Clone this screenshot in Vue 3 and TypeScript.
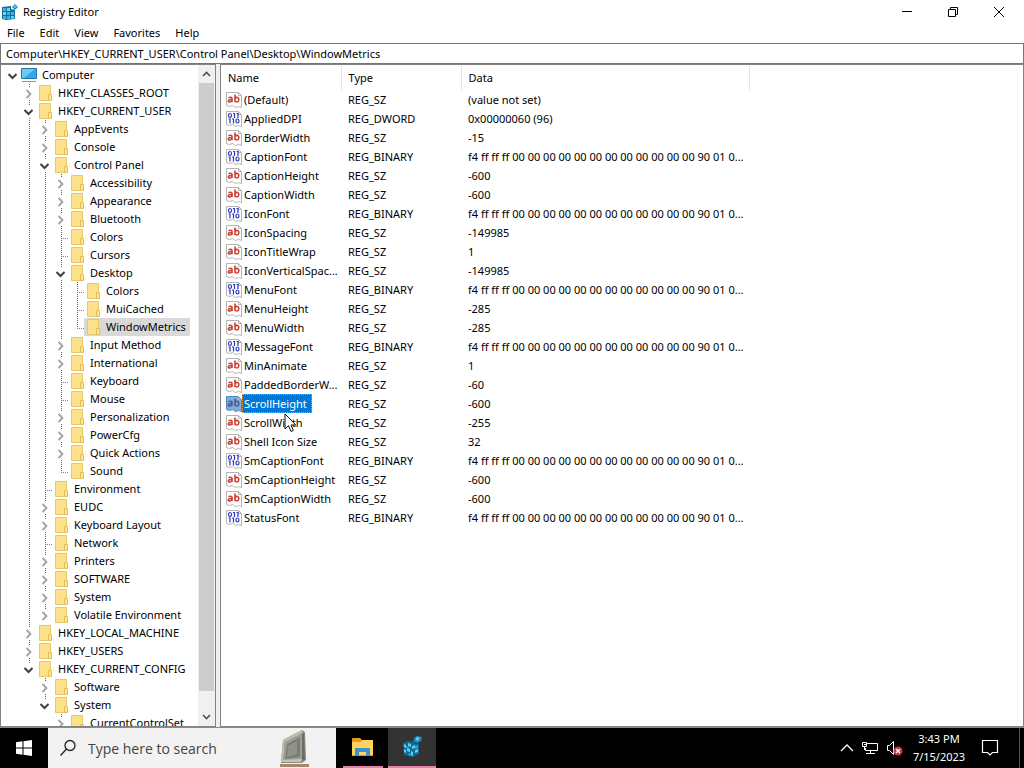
<script setup lang="ts">
import { ref } from 'vue'

type NodeState = 'open' | 'closed' | 'leaf'
interface TreeRow { depth: number; state: NodeState; label: string; guides: boolean[]; last: boolean }
interface RegValue { name: string; type: string; data: string }

const source: [number, NodeState, string][] = [
  [0, 'open', 'Computer'],
  [1, 'closed', 'HKEY_CLASSES_ROOT'],
  [1, 'open', 'HKEY_CURRENT_USER'],
  [2, 'closed', 'AppEvents'],
  [2, 'closed', 'Console'],
  [2, 'open', 'Control Panel'],
  [3, 'closed', 'Accessibility'],
  [3, 'closed', 'Appearance'],
  [3, 'closed', 'Bluetooth'],
  [3, 'leaf', 'Colors'],
  [3, 'leaf', 'Cursors'],
  [3, 'open', 'Desktop'],
  [4, 'leaf', 'Colors'],
  [4, 'leaf', 'MuiCached'],
  [4, 'leaf', 'WindowMetrics'],
  [3, 'closed', 'Input Method'],
  [3, 'closed', 'International'],
  [3, 'leaf', 'Keyboard'],
  [3, 'leaf', 'Mouse'],
  [3, 'closed', 'Personalization'],
  [3, 'closed', 'PowerCfg'],
  [3, 'closed', 'Quick Actions'],
  [3, 'leaf', 'Sound'],
  [2, 'leaf', 'Environment'],
  [2, 'closed', 'EUDC'],
  [2, 'closed', 'Keyboard Layout'],
  [2, 'leaf', 'Network'],
  [2, 'closed', 'Printers'],
  [2, 'closed', 'SOFTWARE'],
  [2, 'closed', 'System'],
  [2, 'closed', 'Volatile Environment'],
  [1, 'closed', 'HKEY_LOCAL_MACHINE'],
  [1, 'closed', 'HKEY_USERS'],
  [1, 'open', 'HKEY_CURRENT_CONFIG'],
  [2, 'closed', 'Software'],
  [2, 'open', 'System'],
  [3, 'closed', 'CurrentControlSet'],
]

// A guide continues below a row when a sibling at that level still follows.
function continues(index: number, level: number): boolean {
  for (let i = index + 1; i < source.length; i++) {
    if (source[i][0] < level) return false
    if (source[i][0] === level) return true
  }
  return false
}

const rows: TreeRow[] = source.map(([depth, state, label], i) => ({
  depth,
  state,
  label,
  guides: Array.from({ length: depth }, (_, level) => continues(i, level)),
  last: !continues(i, depth),
}))

const binary = 'f4 ff ff ff 00 00 00 00 00 00 00 00 00 00 00 00 90 01 0...'
const sz = (name: string, data: string): RegValue => ({ name, type: 'REG_SZ', data })
const bin = (name: string): RegValue => ({ name, type: 'REG_BINARY', data: binary })

const values: RegValue[] = [
  sz('(Default)', '(value not set)'),
  { name: 'AppliedDPI', type: 'REG_DWORD', data: '0x00000060 (96)' },
  sz('BorderWidth', '-15'),
  bin('CaptionFont'),
  sz('CaptionHeight', '-600'),
  sz('CaptionWidth', '-600'),
  bin('IconFont'),
  sz('IconSpacing', '-149985'),
  sz('IconTitleWrap', '1'),
  sz('IconVerticalSpac...', '-149985'),
  bin('MenuFont'),
  sz('MenuHeight', '-285'),
  sz('MenuWidth', '-285'),
  bin('MessageFont'),
  sz('MinAnimate', '1'),
  sz('PaddedBorderW...', '-60'),
  sz('ScrollHeight', '-600'),
  sz('ScrollWidth', '-255'),
  sz('Shell Icon Size', '32'),
  bin('SmCaptionFont'),
  sz('SmCaptionHeight', '-600'),
  sz('SmCaptionWidth', '-600'),
  bin('StatusFont'),
]

const menus = ['File', 'Edit', 'View', 'Favorites', 'Help']
const path = ref('Computer\\HKEY_CURRENT_USER\\Control Panel\\Desktop\\WindowMetrics')
const activeKey = ref('WindowMetrics')
const activeValue = ref('ScrollHeight')
const query = ref('')
</script>

<template>
  <div class="screen">
    <main class="window">
      <header class="titlebar">
        <svg class="app-icon" width="16" height="16" viewBox="0 0 16 16" aria-hidden="true">
          <path d="M0 3l9-1v3l4 1v9l-9 1-4-1z" fill="#14719b" />
          <path d="M1 4h3v3H1zM5 4h3v3H5zM1 8h3v3H1zM5 8h3v3H5zM9 8h3v3H9zM1 12h3v3H1zM5 12h3v3H5zM9 12h3v3H9z" fill="#39b5e4" />
          <path d="M5 4h3v3H5zM1 8h3v3H1zM9 12h3v2H9z" fill="#6fd3f3" />
          <path d="M13 0l3 3-3 3-3-3z" fill="#168ac0" />
          <path d="M13 1l2 2-2 1-2-1z" fill="#58c8ee" />
        </svg>
        <h1>Registry Editor</h1>
        <div class="controls">
          <button type="button" aria-label="Minimize">
            <svg width="12" height="12" viewBox="0 0 12 12"><path d="M1 5.500h10" stroke="#000" fill="none" /></svg>
          </button>
          <button type="button" aria-label="Restore">
            <svg width="12" height="12" viewBox="0 0 12 12"><path d="M1.500 3.500h7v7h-7zM3.500 3.500v-2h7v7h-2" stroke="#000" fill="none" /></svg>
          </button>
          <button type="button" aria-label="Close">
            <svg width="12" height="12" viewBox="0 0 12 12"><path d="M1 1l10 10M11 1L1 11" stroke="#000" fill="none" /></svg>
          </button>
        </div>
      </header>

      <nav class="menubar" aria-label="Menu">
        <button v-for="menu in menus" :key="menu" type="button">{{ menu }}</button>
      </nav>

      <input v-model="path" class="address" type="text" aria-label="Address" spellcheck="false" />

      <div class="panes">
        <section class="tree-pane" aria-label="Keys">
          <ul class="tree" role="tree">
            <li v-for="(row, i) in rows" :key="i" role="treeitem" :aria-level="row.depth + 1">
              <span v-for="(line, level) in row.guides" :key="level" class="guide" :class="{ line }"></span>
              <span v-if="row.state === 'leaf'" class="guide branch" :class="row.last ? 'end' : 'line'"></span>
              <button
                v-else
                type="button"
                class="guide toggle"
                :class="row.depth === 0 ? '' : row.last ? 'end' : 'line'"
                :aria-label="(row.state === 'open' ? 'Collapse ' : 'Expand ') + row.label"
              >
                <svg width="12" height="13" viewBox="0 0 12 13">
                  <path v-if="row.state === 'open'" d="M2.500 5l4 4 4-4" stroke="#404040" stroke-width="2" fill="none" />
                  <path v-else d="M4.500 3l4 4-4 4" stroke="#a2a2a2" stroke-width="1.800" fill="none" />
                </svg>
              </button>
              <button
                type="button"
                class="key"
                :class="{ active: row.label === activeKey }"
                @click="activeKey = row.label"
              >
                <svg v-if="row.depth === 0" class="key-icon" width="18" height="16" viewBox="0 0 18 16">
                  <path d="M1.500 1.500h15v10h-15z" fill="#35a7e8" stroke="#2376a9" />
                  <path d="M2 2h13L4 11H2z" fill="#70c9f5" />
                  <path d="M2 14.500h14" stroke="#8799a5" />
                </svg>
                <svg v-else class="key-icon" width="18" height="16" viewBox="0 0 18 16">
                  <path d="M3.500.5h11v15h-11z" fill="#fbe28a" stroke="#e8c869" />
                  <path d="M12.500 9.500h3v6h-3z" fill="#ffe68e" stroke="#e3bd55" />
                </svg>
                <span>{{ row.label }}</span>
              </button>
            </li>
          </ul>
          <div class="scrollbar">
            <button type="button" aria-label="Scroll up">
              <svg width="9" height="8" viewBox="0 0 9 8"><path d="M1 6l3.500-3.500L8 6" stroke="#505050" stroke-width="1.600" fill="none" /></svg>
            </button>
            <div class="track"><div class="thumb"></div></div>
            <button type="button" aria-label="Scroll down">
              <svg width="9" height="8" viewBox="0 0 9 8"><path d="M1 2l3.500 3.500L8 2" stroke="#505050" stroke-width="1.600" fill="none" /></svg>
            </button>
          </div>
        </section>

        <section class="list-pane" aria-label="Values">
          <table>
            <colgroup><col class="c-name" /><col class="c-type" /><col class="c-data" /></colgroup>
            <thead>
              <tr><th scope="col">Name</th><th scope="col">Type</th><th scope="col">Data</th></tr>
            </thead>
            <tbody>
              <tr v-for="value in values" :key="value.name" @click="activeValue = value.name">
                <td class="name" :class="{ active: value.name === activeValue }">
                  <div class="cell">
                    <svg width="16" height="16" viewBox="0 0 16 16" aria-hidden="true">
                      <path class="paper" d="M.5.5h12l3 3v12l-3-1-3 1-3-2-3 1-3-1z" />
                      <path class="fold" d="M12.500.5v3h3" />
                      <g v-if="value.type === 'REG_SZ'" class="ab">
                        <path d="M2.500 5.800q2.500-1.300 3.500.3v4M6 7.500q-3.500-.2-3.700 1.300 0 1.500 1.700 1.200 1.500-.2 2-1.500" />
                        <path d="M9 2.500V10M9 6.500q1-1.500 2.700-1Q13 6 12.800 8q-.3 2-1.900 2Q9.500 10 9 9" />
                      </g>
                      <g v-else class="bits">
                        <ellipse cx="4" cy="4.500" rx="1.500" ry="2" />
                        <ellipse cx="11.500" cy="10" rx="1.500" ry="2" />
                        <path d="M7 2.500h1.500v4.500M10.500 2.500H12v4.500M2.500 8H4v4.500M6 8h1.500v4.500" />
                      </g>
                    </svg>
                    <span>{{ value.name }}</span>
                  </div>
                </td>
                <td>{{ value.type }}</td>
                <td>{{ value.data }}</td>
              </tr>
            </tbody>
          </table>
          <svg class="pointer" width="13" height="20" viewBox="0 0 13 20" aria-hidden="true">
            <path d="M1 1v15l3.500-3.300L7 18.500l2.300-1L7 12h4.800z" fill="#fff" stroke="#111" />
          </svg>
        </section>
      </div>
    </main>

    <footer class="taskbar">
      <button type="button" class="start" aria-label="Start">
        <svg width="16" height="16" viewBox="0 0 16 16"><path d="M0 2.200L6.500 1.300v6.200H0zM7.500 1.200L16 0v7.500H7.500zM0 8.500h6.500v6.200L0 13.800zM7.500 8.500H16V16l-8.500-1.200z" fill="#fff" /></svg>
      </button>
      <label class="search">
        <svg width="18" height="18" viewBox="0 0 18 18" aria-hidden="true"><circle cx="11" cy="6.500" r="5" stroke="#222" stroke-width="1.300" fill="none" /><path d="M7.500 10L1.500 16.500" stroke="#222" stroke-width="1.300" /></svg>
        <input v-model="query" type="text" placeholder="Type here to search" aria-label="Search" />
        <svg class="monitor" width="32" height="38" viewBox="0 0 32 38" aria-hidden="true">
          <path d="M1 35h29v3H1z" fill="#a5876b" />
          <path d="M4 11L23 1l3 2 1 28-4 3H2z" fill="#8b8c7e" />
          <path d="M4 11L23 1l1 3-18 9-2 20H2z" fill="#bcbbac" />
          <path d="M6 13l17-8v25l-1 3H4z" fill="#a09f95" />
          <path d="M8 15l13-7v20L6 30z" fill="#7b7c75" />
          <path d="M9 17l9-5v13l-10 3z" fill="#91928b" />
          <path d="M23 4l2 1 1 25-3 2z" fill="#6c6e61" />
          <path d="M3 31l20-1-1 3H2z" fill="#c4c3b5" />
        </svg>
      </label>
      <button type="button" class="task" aria-label="File Explorer">
        <svg width="24" height="20" viewBox="0 0 24 20">
          <path d="M1 2q0-1 1-1h7l2 2h11v16H1z" fill="#e79c1d" />
          <path d="M1 5h9l2-2h10v14q0 1-1 1H1z" fill="#ffd45c" />
          <path d="M4 19v-7q0-1 1-1h13q1 0 1 1v7h-4v-4H8v4z" fill="#3c91d0" />
        </svg>
      </button>
      <button type="button" class="task current" aria-label="Registry Editor">
        <svg width="24" height="24" viewBox="0 0 24 24">
          <path d="M3 8l5-2 4 1 1-2 3 1-1 3 4-1v11l-6 3-9-2z" fill="#12688f" />
          <path d="M4 9l2 1v3l-2-1zM8 8l3 1v3l-3-1zM4 14l2 1v3l-2-1zM7 13l3 1v3l-3-1zM11 16l2 1v4l-2-1zM15 15l3-1v3l-3 1zM12 11l3-1v3l-3 1z" fill="#62cdf3" />
          <path d="M6 11l3 1v2l-3-1zM9 18l2 1v2l-3-1zM15 11l3-1v3l-3 1z" fill="#25a3d5" />
          <path d="M14 3l3-2 5 1-1 4-4 2-3-2z" fill="#1c91be" />
          <path d="M16 3l2-1 1 2-2 2z" fill="#77dafa" />
        </svg>
      </button>
      <div class="tray">
        <button type="button" aria-label="Show hidden icons">
          <svg width="14" height="16" viewBox="0 0 14 16"><path d="M1 11l6-6 6 6" stroke="#fff" stroke-width="1.300" fill="none" /></svg>
        </button>
        <button type="button" aria-label="Network">
          <svg width="18" height="16" viewBox="0 0 18 16"><path d="M6 3.500h10.500v7H4.500V8M9.500 10.500v3M5 13.500h9M1.500 2.500h4v4h-4zM3.500 6.500V10" stroke="#fff" fill="none" /><path d="M3 4h2v1H3z" fill="#fff" /></svg>
        </button>
        <button type="button" aria-label="Volume muted">
          <svg width="18" height="16" viewBox="0 0 18 16"><path d="M1.500 5.500h2l4-4v13l-4-4h-2z" stroke="#fff" fill="none" /><circle cx="12" cy="11" r="4.500" fill="#c9343f" /><path d="M10 9l4 4M14 9l-4 4" stroke="#fff" stroke-width="1.300" /></svg>
        </button>
      </div>
      <div class="clock"><time>3:43 PM</time><time>7/15/2023</time></div>
      <button type="button" class="notices" aria-label="Notifications">
        <svg width="18" height="18" viewBox="0 0 18 18"><path d="M1.500 1.500h15v12h-5L9 16l-2.500-2.500h-5z" stroke="#fff" stroke-width="1.200" fill="none" /></svg>
      </button>
      <button type="button" class="peek" aria-label="Show desktop"></button>
    </footer>
  </div>
</template>

<style>
body {
  overflow: hidden;
}
</style>

<style scoped>
.screen {
  display: flex;
  flex-direction: column;
  height: 100vh;
  overflow: hidden;
  background: #fff;
  color: #000;
  font: 11px/18px "Noto Sans", "Open Sans", sans-serif;
}
button {
  display: flex;
  align-items: center;
  justify-content: center;
  padding: 0;
  border: 0;
  background: none;
  color: inherit;
  font: inherit;
}
input {
  box-sizing: border-box;
  min-width: 0;
  border: 0;
  outline: 0;
  font: inherit;
}
.window {
  display: flex;
  flex: 1;
  flex-direction: column;
  min-height: 0;
}
.titlebar {
  display: flex;
  align-items: center;
  height: 24px;
  padding-left: 2px;
}
h1 {
  flex: 1;
  margin: 0 0 0 5px;
  font-size: 11px;
  font-weight: 400;
}
.controls {
  display: flex;
  height: 20px;
  margin-right: 2px;
}
.controls button {
  width: 46px;
}
.menubar {
  display: flex;
  align-items: flex-start;
  height: 19px;
  gap: 15px;
  padding-left: 7px;
}
.address {
  height: 21px;
  padding: 0 5px;
  border: 1px solid #767676;
}
.panes {
  display: flex;
  flex: 1;
  min-height: 0;
  background: #f0f0f0;
}
.tree-pane {
  display: flex;
  width: 216px;
  box-sizing: border-box;
  border: 1px solid #828282;
  background: #fff;
}
.tree {
  flex: 1;
  min-width: 0;
  margin: 0;
  padding: 1px 0 0 3px;
  overflow: hidden;
  list-style: none;
}
.tree li {
  display: flex;
  height: 18px;
}
.guide {
  flex: none;
  width: 16px;
  height: 18px;
  background-repeat: no-repeat;
}
.line,
.end {
  background-image: repeating-linear-gradient(#606060 0 1px, transparent 1px 2px);
  background-position: 9px 0;
  background-size: 1px 100%;
}
.end {
  background-size: 1px 10px;
}
.branch {
  background-image: repeating-linear-gradient(#606060 0 1px, transparent 1px 2px), repeating-linear-gradient(90deg, #808080 0 1px, transparent 1px 2px);
  background-position: 9px 0, 9px 10px;
  background-size: 1px 100%, 7px 1px;
}
.branch.end {
  background-size: 1px 10px, 7px 1px;
}
.toggle svg {
  margin-top: 1px;
  background: #fff;
}
.key {
  flex: none;
  height: 18px;
  padding-right: 4px;
}
.key.active {
  background: #d9d9d9;
}
.key-icon {
  margin-right: 4px;
}
.scrollbar {
  display: flex;
  flex-direction: column;
  width: 17px;
  background: #f0f0f0;
}
.scrollbar button {
  height: 18px;
}
.track {
  flex: 1;
}
.thumb {
  height: calc(100% - 17px);
  margin: 0 1px;
  background: #cdcdcd;
}
.list-pane {
  position: relative;
  flex: 1;
  min-width: 0;
  margin-left: 4px;
  padding-top: 1px;
  border: 1px solid #828282;
  overflow: hidden;
  background: #fff;
}
table {
  width: 529px;
  table-layout: fixed;
  border-collapse: collapse;
  white-space: nowrap;
}
.c-name,
.c-type {
  width: 120px;
}
th {
  height: 24px;
  padding: 0 7px;
  border-right: 1px solid #e5e5e5;
  font-weight: 400;
  text-align: left;
}
td {
  height: 19px;
  padding: 0 0 0 7px;
}
td.name {
  padding-left: 5px;
}
.cell {
  display: flex;
  align-items: center;
  height: 19px;
}
.cell svg {
  flex: none;
}
.cell span {
  box-sizing: border-box;
  height: 19px;
  padding: 0 4px 0 1px;
  border: 1px solid transparent;
  line-height: 17px;
}
.active .cell span {
  border: 1px dotted #e59a4a;
  background: #0078d7;
  color: #fff;
}
.paper {
  fill: #fff;
  stroke: #b4b4b4;
}
.fold {
  fill: none;
  stroke: #b4b4b4;
}
.ab {
  fill: none;
  stroke: #cb3f31;
  stroke-width: 1.6;
}
.bits {
  fill: none;
  stroke: #2b39b8;
  stroke-width: 1.2;
}
.active .paper {
  fill: #7faedb;
  stroke: #4c88c4;
}
.active .ab {
  stroke: #53588c;
}
.pointer {
  position: absolute;
  left: 63px;
  top: 348px;
}
.taskbar {
  display: flex;
  height: 40px;
  border-top: 1px solid #8a8a8a;
  background: #000;
  color: #fff;
}
.start {
  width: 48px;
}
.search {
  display: flex;
  align-items: center;
  width: 288px;
  box-sizing: border-box;
  padding-left: 11px;
  background: #f2f2f2;
}
.search input {
  flex: 1;
  padding: 1px 0 0 11px;
  background: none;
  color: #444;
  font-family: "Open Sans", "Noto Sans", sans-serif;
  font-size: 14px;
}
.search input::placeholder {
  color: #444;
  opacity: 1;
}
.monitor {
  margin-right: 25px;
}
.task {
  width: 40px;
  margin: 0 5px 0 7px;
  border-bottom: 2px solid #e583a5;
}
.task.current {
  width: 48px;
  margin: 0;
  background: #333;
}
.tray {
  display: flex;
  gap: 7px;
  margin-left: auto;
}
.clock {
  display: flex;
  flex-direction: column;
  justify-content: center;
  width: 70px;
  text-align: center;
}
.notices {
  width: 32px;
  margin-right: 13px;
}
.peek {
  width: 5px;
  border-left: 1px solid #555;
}
</style>
